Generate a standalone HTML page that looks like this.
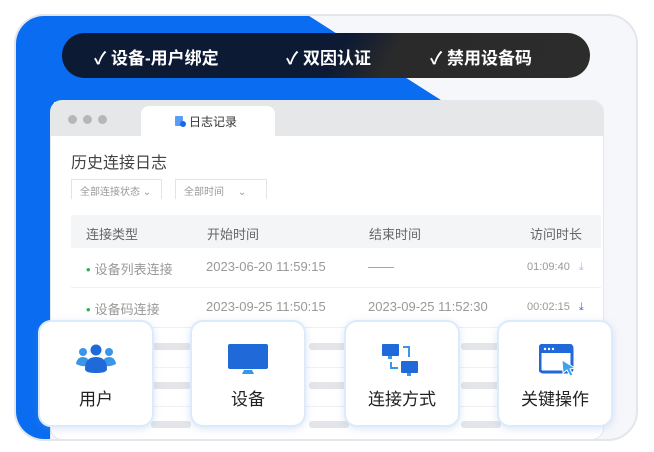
<!DOCTYPE html>
<html><head><meta charset="utf-8"><style>
*{margin:0;padding:0;box-sizing:border-box}
body{width:654px;height:452px;background:#fff;font-family:"Liberation Sans","Noto Sans CJK SC",sans-serif;position:relative;overflow:hidden}
.a{position:absolute}
.outer{left:14px;top:14px;width:624px;height:427px;border-radius:30px;background:#f6f7fb;border:2px solid #e4e6ec;overflow:hidden}
.pill{left:62px;top:33px;width:528px;height:45px;border-radius:23px;background:linear-gradient(120deg,#0c1a34 0%,#0c1a34 52%,#2a2a2a 62%,#2c2c2c 100%);color:#fff;font-size:17px;font-weight:bold}
.pill span{position:absolute;top:11px}
.win{left:50px;top:100px;width:554px;height:340px;border-radius:12px;background:#fff;border:1px solid #e5e7ec;overflow:hidden}
.hdr{left:0;top:0;width:554px;height:35px;background:#e6e7e9}
.dot{width:9px;height:9px;border-radius:50%;background:#b5b7bb;top:14px}
.tab{left:90px;top:5px;width:134px;height:31px;background:#fff;border-radius:8px 8px 0 0;font-size:12px;color:#333}
.dd{height:20px;border:1px solid #e3e4e7;font-size:10px;color:#999;padding:3px 8px;border-bottom:none}
.th{left:20px;top:114px;width:530px;height:33px;background:#f4f5f7;font-size:13px;color:#666}
.row{font-size:13px;color:#999}
.line{height:1px;background:#eef0f3;left:20px;width:530px}
.bar{height:7px;background:#e3e5e8;border-radius:3px}
.card{top:320px;width:116px;height:107px;background:#fff;border-radius:13px;border:2px solid #dcebfb;box-shadow:0 2px 8px rgba(120,160,220,.25);text-align:center}
.card .t{position:absolute;left:0;right:0;top:63px;font-size:17px;color:#222}
.card svg{position:absolute;left:50%;transform:translateX(-50%);top:22px}
</style></head><body>
<div class="a outer">
<svg class="a" style="left:-2px;top:-2px" width="624" height="430"><polygon points="0,0 292,0 430,88 40,88 36,430 0,430" fill="#0a6cf0"/></svg>
</div>
<div class="a pill">
<span style="left:32px">✓ 设备-用户绑定</span>
<span style="left:224px">✓ 双因认证</span>
<span style="left:368px">✓ 禁用设备码</span>
</div>
<div class="a win">
<div class="a hdr"></div>
<div class="a dot" style="left:17px"></div><div class="a dot" style="left:32px"></div><div class="a dot" style="left:47px"></div>
<div class="a tab"><svg class="a" style="left:34px;top:10px" width="11" height="11"><rect x="0" y="0" width="8" height="10" rx="1" fill="#5b9cf5"/><circle cx="8" cy="8" r="3" fill="#1a6ae8"/></svg><span class="a" style="left:48px;top:7px">日志记录</span></div>
<div class="a" style="left:20px;top:48px;font-size:16px;color:#444">历史连接日志</div>
<div class="a dd" style="left:20px;top:78px;width:91px">全部连接状态 ⌄</div>
<div class="a dd" style="left:124px;top:78px;width:92px">全部时间 &nbsp;&nbsp;&nbsp;&nbsp;⌄</div>
<div class="a th"><span class="a" style="left:15px;top:9px">连接类型</span><span class="a" style="left:136px;top:9px">开始时间</span><span class="a" style="left:298px;top:9px">结束时间</span><span class="a" style="left:459px;top:9px">访问时长</span></div>
<div class="a row" style="left:35px;top:158px"><span style="color:#2db34a;margin-right:4px">•</span>设备列表连接</div>
<div class="a row" style="left:155px;top:158px">2023-06-20 11:59:15</div>
<div class="a row" style="left:317px;top:158px">——</div>
<div class="a row" style="left:476px;top:160px;font-size:11px">01:09:40 <span style="color:#9cc0f0;margin-left:6px">⤓</span></div>
<div class="a line" style="top:186px"></div>
<div class="a row" style="left:35px;top:198px"><span style="color:#2db34a;margin-right:4px">•</span>设备码连接</div>
<div class="a row" style="left:155px;top:198px">2023-09-25 11:50:15</div>
<div class="a row" style="left:317px;top:198px">2023-09-25 11:52:30</div>
<div class="a row" style="left:476px;top:200px;font-size:11px">00:02:15 <span style="color:#2a72e0;margin-left:6px">⤓</span></div>
<div class="a line" style="top:226px"></div>
<div class="a line" style="top:266px"></div>
<div class="a line" style="top:305px"></div>
<div class="a bar" style="left:100px;top:242px;width:40px"></div><div class="a bar" style="left:258px;top:242px;width:40px"></div><div class="a bar" style="left:410px;top:242px;width:40px"></div>
<div class="a bar" style="left:100px;top:281px;width:40px"></div><div class="a bar" style="left:258px;top:281px;width:40px"></div><div class="a bar" style="left:410px;top:281px;width:40px"></div>
<div class="a bar" style="left:100px;top:320px;width:40px"></div><div class="a bar" style="left:258px;top:320px;width:40px"></div><div class="a bar" style="left:410px;top:320px;width:40px"></div>
</div>
<div class="a card" style="left:38px"><svg width="40" height="30"><circle cx="7" cy="8" r="4" fill="#3a96e8"/><circle cx="33" cy="8" r="4" fill="#3a96e8"/><path d="M0 20 Q1 13 7 13 Q12 13 13 18 L13 22 Q6 23 0 20Z" fill="#3a96e8"/><path d="M40 20 Q39 13 33 13 Q28 13 27 18 L27 22 Q34 23 40 20Z" fill="#3a96e8"/><circle cx="20" cy="6" r="5.5" fill="#1f6ad8"/><path d="M9 25 Q9 13 20 13 Q31 13 31 25 Q31 29 20 29 Q9 29 9 25Z" fill="#1f6ad8"/></svg><div class="t">用户</div></div>
<div class="a card" style="left:190px"><svg width="40" height="30"><rect x="0" y="0" width="40" height="25" rx="2" fill="#1f6ad8"/><path d="M14 30 L16 26 L24 26 L26 30Z" fill="#3a96e8"/></svg><div class="t">设备</div></div>
<div class="a card" style="left:344px"><svg width="40" height="32"><rect x="0" y="0" width="17" height="12" rx="1" fill="#1f6ad8"/><rect x="6" y="12" width="4" height="3" fill="#3a96e8"/><rect x="19" y="17" width="17" height="12" rx="1" fill="#1f6ad8"/><rect x="25" y="29" width="4" height="3" fill="#3a96e8"/><path d="M21 3 H27 V13 M9 18 V24 H16" stroke="#3a96e8" stroke-width="2" fill="none"/></svg><div class="t">连接方式</div></div>
<div class="a card" style="left:497px"><svg width="40" height="32" style="margin-left:4px"><rect x="1" y="1" width="32" height="27" rx="3" fill="none" stroke="#1f6ad8" stroke-width="3"/><rect x="1" y="1" width="32" height="8" fill="#1f6ad8"/><circle cx="6" cy="5" r="1.2" fill="#fff"/><circle cx="10" cy="5" r="1.2" fill="#fff"/><circle cx="14" cy="5" r="1.2" fill="#fff"/><path d="M23 16 L36 24 L31 25 L34 31 L31 32 L28 26 L24 29Z" fill="#3aa4ee" stroke="#fff" stroke-width="1"/></svg><div class="t">关键操作</div></div>
</body></html>
